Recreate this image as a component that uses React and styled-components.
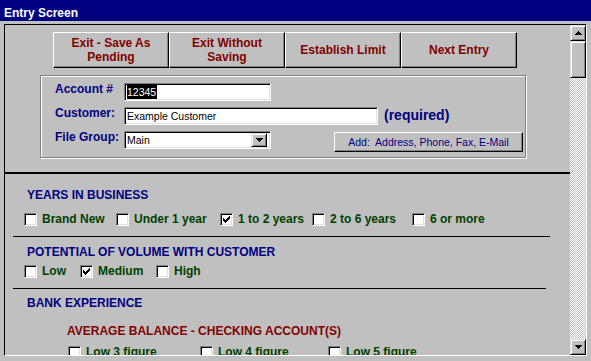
import React from "react";
import styled, { createGlobalStyle } from "styled-components";

const NAVY = "#000080";
const MAROON = "#800000";
const GREEN = "#004000";
const FACE = "#c0c0c0";
const SHADOW = "#808080";
const LIGHT = "#dfdfdf";

const GlobalStyle = createGlobalStyle`
  html, body { margin: 0; padding: 0; background: ${FACE}; }
  body { font-family: "Liberation Sans", Arial, sans-serif; }
  #root { width: 591px; height: 361px; }
`;

const Window = styled.div`
  width: 591px;
  height: 361px;
  background: ${FACE};
  display: flex;
  flex-direction: column;
  overflow: hidden;
`;

const TitleBar = styled.div`
  flex: none;
  height: 21px;
  box-sizing: border-box;
  padding: 6px 0 0 4px;
  background: ${NAVY};
  color: #fff;
  font: bold 12px/14px "Liberation Sans", Arial, sans-serif;
`;

const Frame = styled.div`
  flex: 1;
  min-height: 0;
  display: flex;
  padding: 3px 4px 5px 4px;
`;

const Client = styled.div`
  flex: 1;
  min-height: 0;
  display: flex;
  border-top: 1px solid #000;
  border-left: 1px solid #000;
  border-right: 1px solid #fff;
  border-bottom: 1px solid #fff;
  overflow: hidden;
`;

const Content = styled.div`
  flex: 1;
  min-width: 0;
  display: flex;
  flex-direction: column;
  overflow: hidden;
  & > * { flex: none; }
`;

const ScrollBar = styled.div`
  flex: none;
  width: 16px;
  display: flex;
  flex-direction: column;
  background-color: ${FACE};
  background-image: repeating-conic-gradient(#fff 0 25%, ${FACE} 0 50%);
  background-size: 2px 2px;
`;

const Raised = styled.div`
  box-sizing: border-box;
  background: ${FACE};
  border-top: 1px solid ${LIGHT};
  border-left: 1px solid ${LIGHT};
  border-right: 1px solid #000;
  border-bottom: 1px solid #000;
  box-shadow: inset 1px 1px #fff, inset -1px -1px ${SHADOW};
`;

const ScrollButton = styled(Raised)`
  flex: none;
  width: 16px;
  height: 16px;
  display: flex;
  align-items: center;
  justify-content: center;
`;

const Thumb = styled(Raised)`
  flex: none;
  width: 16px;
  height: 37px;
`;

const Track = styled.div`
  flex: 1;
`;

const ButtonRow = styled.div`
  display: flex;
  margin: 7px 0 0 48px;
`;

const ActionButton = styled.div`
  width: 116px;
  height: 36px;
  box-sizing: border-box;
  background: ${FACE};
  border-top: 1px solid #fff;
  border-left: 1px solid #fff;
  border-right: 1px solid #000;
  border-bottom: 1px solid #000;
  box-shadow: inset -1px -1px ${SHADOW};
  display: flex;
  align-items: center;
  justify-content: center;
  text-align: center;
  color: ${MAROON};
  font: bold 12px/14px "Liberation Sans", Arial, sans-serif;
`;

const Panel = styled.div`
  margin: 7px 0 0 35px;
  width: 486px;
  height: 83px;
  box-sizing: border-box;
  border: 1px solid ${SHADOW};
  box-shadow: inset 1px 1px #fff, 1px 1px #fff;
  padding: 7px 0 0 14px;
  display: flex;
  flex-direction: column;
  gap: 6px;
`;

const FieldRow = styled.div`
  display: flex;
  align-items: flex-start;
  height: 18px;
`;

const FieldLabel = styled.div`
  width: 69px;
  flex: none;
  color: ${NAVY};
  font: bold 12px/12px "Liberation Sans", Arial, sans-serif;
  white-space: nowrap;
`;

const TextBox = styled.div`
  width: ${(p) => p.$w}px;
  height: 18px;
  box-sizing: border-box;
  flex: none;
  background: #fff;
  border-top: 1px solid ${SHADOW};
  border-left: 1px solid ${SHADOW};
  border-right: 1px solid #fff;
  border-bottom: 1px solid #fff;
  box-shadow: inset 1px 1px #000, inset -1px -1px ${LIGHT};
  padding: 1px 1px 1px 2px;
  display: flex;
  align-items: center;
  justify-content: space-between;
  color: #000;
  font: 10.5px/14px "Liberation Sans", Arial, sans-serif;
  white-space: nowrap;
`;

const Selected = styled.span`
  display: inline-block;
  background: #000;
  color: #fff;
  line-height: 14px;
  padding-right: 1px;
`;

const DropButton = styled(Raised)`
  width: 16px;
  height: 14px;
  margin-right: 2px;
  display: flex;
  align-items: center;
  justify-content: center;
`;

const Required = styled.div`
  margin-left: 6px;
  color: ${NAVY};
  font: bold 14px/16px "Liberation Sans", Arial, sans-serif;
`;

const AddButton = styled.div`
  margin: 1px 0 0 63px;
  width: 189px;
  height: 20px;
  box-sizing: border-box;
  background: ${FACE};
  border-top: 1px solid #fff;
  border-left: 1px solid #fff;
  border-right: 1px solid #000;
  border-bottom: 1px solid #000;
  box-shadow: inset -1px -1px ${SHADOW};
  display: flex;
  align-items: center;
  justify-content: center;
  color: ${NAVY};
  font: 10.5px/14px "Liberation Sans", Arial, sans-serif;
  white-space: pre;
`;

const ThickRule = styled.div`
  margin-top: 14px;
  height: 2px;
  background: #000;
`;

const Rule = styled.div`
  margin: ${(p) => p.$top}px 0 0 8px;
  width: ${(p) => p.$w}px;
  height: 1px;
  background: #000;
`;

const Heading = styled.div`
  margin: ${(p) => p.$top}px 0 0 ${(p) => p.$left}px;
  color: ${(p) => p.$color};
  font: bold 12px/14px "Liberation Sans", Arial, sans-serif;
  white-space: nowrap;
`;

const CheckRow = styled.div`
  display: flex;
  margin: ${(p) => p.$top}px 0 0 ${(p) => p.$left}px;
  height: 13px;
`;

const CheckItem = styled.div`
  flex: none;
  width: ${(p) => (p.$w ? `${p.$w}px` : "auto")};
  display: flex;
  align-items: center;
  gap: 5px;
`;

const Box = styled.div`
  width: 13px;
  height: 13px;
  box-sizing: border-box;
  flex: none;
  background: #fff;
  border-top: 1px solid ${SHADOW};
  border-left: 1px solid ${SHADOW};
  border-right: 1px solid #fff;
  border-bottom: 1px solid #fff;
  box-shadow: inset 1px 1px #000, inset -1px -1px ${LIGHT};
  padding: 1px;
  display: flex;
`;

const CheckLabel = styled.span`
  color: ${GREEN};
  font: bold 12px/13px "Liberation Sans", Arial, sans-serif;
  white-space: nowrap;
`;

const CheckMark = () => (
  <svg width="9" height="9" viewBox="0 0 9 9" shapeRendering="crispEdges">
    <path
      fill="#000"
      d="M1 3h1v3H1z M2 4h1v3H2z M3 5h1v3H3z M4 4h1v3H4z M5 3h1v3H5z M6 2h1v3H6z M7 1h1v3H7z"
    />
  </svg>
);

const Arrow = ({ down }) => (
  <svg width="7" height="4" viewBox="0 0 7 4" shapeRendering="crispEdges">
    <path
      fill="#000"
      d={
        down
          ? "M0 0h7v1H0z M1 1h5v1H1z M2 2h3v1H2z M3 3h1v1H3z"
          : "M3 0h1v1H3z M2 1h3v1H2z M1 2h5v1H1z M0 3h7v1H0z"
      }
    />
  </svg>
);

const Check = ({ label, checked, w }) => (
  <CheckItem $w={w}>
    <Box>{checked && <CheckMark />}</Box>
    <CheckLabel>{label}</CheckLabel>
  </CheckItem>
);

const actions = [
  ["Exit - Save As", "Pending"],
  ["Exit Without", "Saving"],
  ["Establish Limit"],
  ["Next Entry"],
];

const years = [
  { label: "Brand New", w: 92 },
  { label: "Under 1 year", w: 104 },
  { label: "1 to 2 years", w: 92, checked: true },
  { label: "2 to 6 years", w: 100 },
  { label: "6 or more" },
];

const volume = [
  { label: "Low", w: 56 },
  { label: "Medium", w: 76, checked: true },
  { label: "High" },
];

const balance = [
  { label: "Low 3 figure", w: 132 },
  { label: "Low 4 figure", w: 128 },
  { label: "Low 5 figure" },
];

export default function App() {
  return (
    <>
      <GlobalStyle />
      <Window>
        <TitleBar>Entry Screen</TitleBar>
        <Frame>
          <Client>
            <Content>
              <ButtonRow>
                {actions.map((lines) => (
                  <ActionButton key={lines[0]}>
                    {lines.map((l, i) => (
                      <React.Fragment key={l}>
                        {i > 0 && <br />}
                        {l}
                      </React.Fragment>
                    ))}
                  </ActionButton>
                ))}
              </ButtonRow>

              <Panel>
                <FieldRow>
                  <FieldLabel>Account #</FieldLabel>
                  <TextBox $w={147}>
                    <Selected>12345</Selected>
                  </TextBox>
                </FieldRow>
                <FieldRow>
                  <FieldLabel>Customer:</FieldLabel>
                  <TextBox $w={254}>Example Customer</TextBox>
                  <Required>(required)</Required>
                </FieldRow>
                <FieldRow>
                  <FieldLabel>File Group:</FieldLabel>
                  <TextBox $w={147}>
                    <span>Main</span>
                    <DropButton>
                      <Arrow down />
                    </DropButton>
                  </TextBox>
                  <AddButton>{"Add:  Address, Phone, Fax, E-Mail"}</AddButton>
                </FieldRow>
              </Panel>

              <ThickRule />

              <Heading $top={14} $left={22} $color={NAVY}>
                YEARS IN BUSINESS
              </Heading>
              <CheckRow $top={11} $left={19}>
                {years.map((c) => (
                  <Check key={c.label} {...c} />
                ))}
              </CheckRow>
              <Rule $top={10} $w={537} />

              <Heading $top={8} $left={22} $color={NAVY}>
                POTENTIAL OF VOLUME WITH CUSTOMER
              </Heading>
              <CheckRow $top={6} $left={19}>
                {volume.map((c) => (
                  <Check key={c.label} {...c} />
                ))}
              </CheckRow>
              <Rule $top={10} $w={533} />

              <Heading $top={7} $left={22} $color={NAVY}>
                BANK EXPERIENCE
              </Heading>
              <Heading $top={14} $left={62} $color={MAROON}>
                AVERAGE BALANCE - CHECKING ACCOUNT(S)
              </Heading>
              <CheckRow $top={8} $left={63}>
                {balance.map((c) => (
                  <Check key={c.label} {...c} />
                ))}
              </CheckRow>
            </Content>
            <ScrollBar>
              <ScrollButton>
                <Arrow />
              </ScrollButton>
              <Thumb />
              <Track />
              <ScrollButton>
                <Arrow down />
              </ScrollButton>
            </ScrollBar>
          </Client>
        </Frame>
      </Window>
    </>
  );
}
